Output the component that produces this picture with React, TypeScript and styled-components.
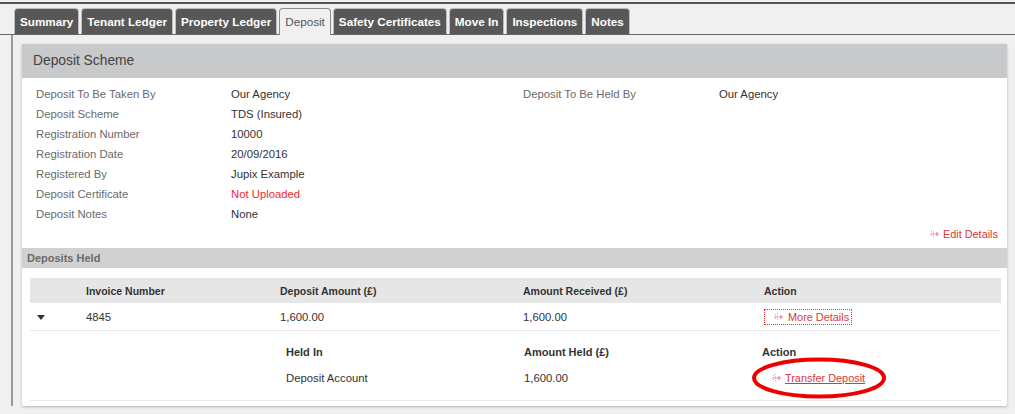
import React from 'react';
import styled, { createGlobalStyle } from 'styled-components';

const GlobalStyle = createGlobalStyle`
  html, body {
    margin: 0;
    padding: 0;
    background: #f0f0f0;
    font-family: "Liberation Sans", Arial, sans-serif;
    color: #333;
  }
`;

interface DetailRow {
  label: string;
  value: string;
  warn?: boolean;
  label2?: string;
  value2?: string;
}

const details: DetailRow[] = [
  { label: 'Deposit To Be Taken By', value: 'Our Agency', label2: 'Deposit To Be Held By', value2: 'Our Agency' },
  { label: 'Deposit Scheme', value: 'TDS (Insured)' },
  { label: 'Registration Number', value: '10000' },
  { label: 'Registration Date', value: '20/09/2016' },
  { label: 'Registered By', value: 'Jupix Example' },
  { label: 'Deposit Certificate', value: 'Not Uploaded', warn: true },
  { label: 'Deposit Notes', value: 'None' },
];

const tabs = ['Summary', 'Tenant Ledger', 'Property Ledger', 'Deposit', 'Safety Certificates', 'Move In', 'Inspections', 'Notes'];

const LinkIcon = () => (
  <svg width="10" height="8" viewBox="0 0 10 8">
    <g stroke="#e9a0a3" strokeWidth="1" fill="none">
      <line x1="1.5" y1="1" x2="1.5" y2="7" strokeDasharray="1 1" />
      <line x1="3.5" y1="0" x2="3.5" y2="8" strokeDasharray="1 1" />
      <line x1="0" y1="4" x2="6" y2="4" />
    </g>
    <path d="M6 1.5 L9.5 4 L6 6.5 Z" fill="#e9a0a3" />
  </svg>
);

const App = () => {
  return (
    <Page>
      <GlobalStyle />
      <TopRule />
      <TabBar>
        {tabs.map((t) => (
          <Tab key={t} active={t === 'Deposit'}>{t}</Tab>
        ))}
      </TabBar>
      <Content>
        <Panel>
          <PanelHeader>Deposit Scheme</PanelHeader>
          <PanelBody>
            {details.map((d) => (
              <DetailLine key={d.label}>
                <Label>{d.label}</Label>
                <Value warn={d.warn}>{d.value}</Value>
                <Label>{d.label2}</Label>
                <Value>{d.value2}</Value>
              </DetailLine>
            ))}
            <EditRow>
              <ActionLink>
                <LinkIcon />
                Edit Details
              </ActionLink>
            </EditRow>
          </PanelBody>
          <SectionBar>Deposits Held</SectionBar>
          <TableWrap>
            <Table>
              <colgroup>
                <col style={{ width: 56 }} />
                <col style={{ width: 194 }} />
                <col style={{ width: 243 }} />
                <col style={{ width: 241 }} />
                <col />
              </colgroup>
              <thead>
                <tr>
                  <Th />
                  <Th>Invoice Number</Th>
                  <Th>Deposit Amount (£)</Th>
                  <Th>Amount Received (£)</Th>
                  <Th>Action</Th>
                </tr>
              </thead>
              <tbody>
                <Tr>
                  <Td>
                    <Caret />
                  </Td>
                  <Td>4845</Td>
                  <Td>1,600.00</Td>
                  <Td>1,600.00</Td>
                  <Td>
                    <MoreDetails>
                      <LinkIcon />
                      More Details
                    </MoreDetails>
                  </Td>
                </Tr>
                <Tr>
                  <td colSpan={2} />
                  <td colSpan={3}>
                    <SubGrid>
                      <SubHead first>Held In</SubHead>
                      <SubHead>Amount Held (£)</SubHead>
                      <SubHead>Action</SubHead>
                      <SubCell first>Deposit Account</SubCell>
                      <SubCell>1,600.00</SubCell>
                      <SubCell>
                        <Circled>
                          <ActionLink underline>
                            <LinkIcon />
                            Transfer Deposit
                          </ActionLink>
                          <Ellipse width="136" height="42" viewBox="0 0 136 42">
                            <ellipse cx="68" cy="21" rx="65" ry="18.5" fill="none" stroke="#ee0000" strokeWidth="4" />
                          </Ellipse>
                        </Circled>
                      </SubCell>
                    </SubGrid>
                  </td>
                </Tr>
              </tbody>
            </Table>
          </TableWrap>
        </Panel>
      </Content>
    </Page>
  );
};

const Page = styled.div`
  width: 1015px;
  height: 414px;
  overflow: hidden;
  padding-top: 2px;
  box-sizing: border-box;
`;

const TopRule = styled.div`
  border-top: 2px solid #555;
`;

const TabBar = styled.div`
  display: flex;
  align-items: flex-end;
  gap: 2px;
  padding: 4px 0 0 14px;
  border-bottom: 1px solid #666;
`;

const Tab = styled.div<{ active?: boolean }>`
  line-height: 26px;
  padding: 0 5px;
  box-sizing: border-box;
  border: 1px solid ${(p) => (p.active ? '#8a8a8a' : '#bdbdbd')};
  border-bottom: none;
  border-radius: 4px 4px 0 0;
  background: ${(p) => (p.active ? '#f0f0f0' : '#585858')};
  color: ${(p) => (p.active ? '#555' : '#fff')};
  font-size: 11.7px;
  font-weight: ${(p) => (p.active ? 'normal' : 'bold')};
  margin-bottom: ${(p) => (p.active ? '-1px' : '0')};
  height: ${(p) => (p.active ? '27px' : '26px')};
`;

const Content = styled.div`
  margin-left: 11px;
  border-left: 2px solid #9a9a9a;
  padding: 9px 8px 0 9px;
`;

const Panel = styled.div`
  background: #fff;
  border-radius: 2px;
  box-shadow: 0 1px 3px rgba(0, 0, 0, 0.25);
  padding-bottom: 5px;
`;

const PanelHeader = styled.div`
  height: 34px;
  line-height: 34px;
  padding-left: 11px;
  background: #c8c9ca;
  font-size: 13.8px;
  color: #444;
`;

const PanelBody = styled.div`
  padding: 6px 9px 4px 14px;
`;

const DetailLine = styled.div`
  display: grid;
  grid-template-columns: 195px 292px 196px 1fr;
  height: 20px;
  align-items: center;
  font-size: 11.3px;
`;

const Label = styled.span`
  color: #6a6a6a;
`;

const Value = styled.span<{ warn?: boolean }>`
  color: ${(p) => (p.warn ? '#f02a2a' : '#333')};
`;

const EditRow = styled.div`
  display: flex;
  justify-content: flex-end;
  align-items: center;
  height: 20px;
`;

const ActionLink = styled.a<{ underline?: boolean }>`
  display: inline-flex;
  align-items: center;
  gap: 3px;
  color: #d9363e;
  font-size: 10.9px;
  cursor: pointer;
  text-decoration: ${(p) => (p.underline ? 'underline' : 'none')};
`;

const SectionBar = styled.div`
  height: 20px;
  line-height: 20px;
  padding-left: 5px;
  background: #d1d1d1;
  color: #6a6a6a;
  font-weight: bold;
  font-size: 11px;
`;

const TableWrap = styled.div`
  padding: 10px 6px 0 8px;
`;

const Table = styled.table`
  width: 100%;
  border-collapse: collapse;
  table-layout: fixed;
  font-size: 11.3px;
`;

const Th = styled.th`
  height: 25px;
  background: #e6e6e6;
  text-align: left;
  font-size: 10.5px;
  font-weight: bold;
  color: #333;
  padding: 0;
`;

const Tr = styled.tr`
  border-bottom: 1px solid #e9e9e9;
`;

const Td = styled.td`
  height: 27px;
  padding: 0;
  color: #333;
`;

const Caret = styled.span`
  display: inline-block;
  margin-left: 7px;
  width: 0;
  height: 0;
  border-left: 4px solid transparent;
  border-right: 4px solid transparent;
  border-top: 5px solid #333;
  vertical-align: middle;
`;

const MoreDetails = styled.a`
  display: inline-flex;
  align-items: center;
  gap: 4px;
  padding: 1px 2px 1px 9px;
  border: 1px dotted #d9363e;
  color: #d9363e;
  font-size: 10.9px;
  cursor: pointer;
`;

const SubGrid = styled.div`
  display: grid;
  grid-template-columns: 243px 238px 1fr;
  grid-auto-rows: 26px;
  align-items: center;
  padding: 7px 0 8px;
`;

const SubHead = styled.div<{ first?: boolean }>`
  padding-left: ${(p) => (p.first ? '5px' : '0')};
  font-weight: bold;
  font-size: 11px;
  color: #333;
`;

const SubCell = styled.div<{ first?: boolean }>`
  padding-left: ${(p) => (p.first ? '5px' : '0')};
  color: #333;
`;

const Circled = styled.span`
  position: relative;
  display: inline-block;
  margin-left: 10px;
`;

const Ellipse = styled.svg`
  position: absolute;
  left: 50%;
  top: 50%;
  transform: translate(-50%, -50%);
  pointer-events: none;
`;

export default App;
